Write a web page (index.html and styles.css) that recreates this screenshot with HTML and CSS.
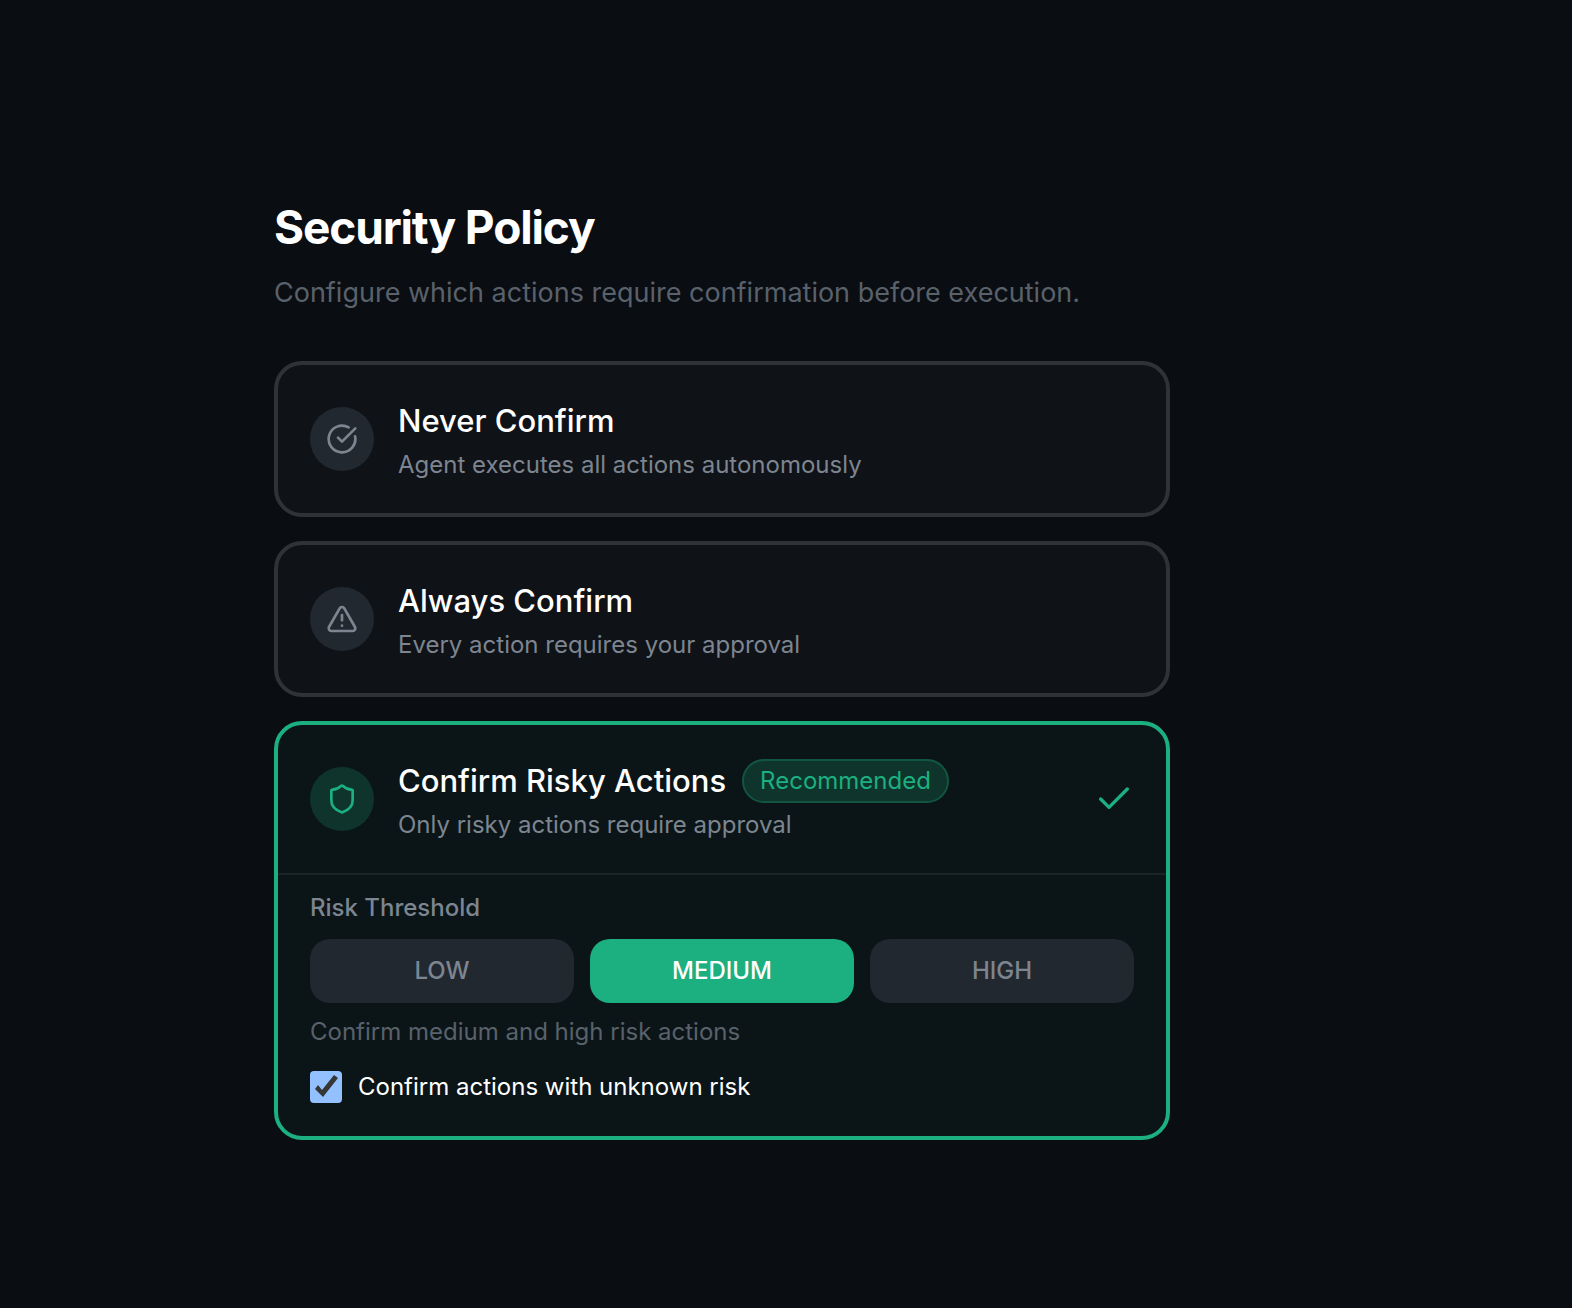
FILE: index.html
```html
<!DOCTYPE html>
<html lang="en">
<head>
  <meta charset="UTF-8">
  <meta name="viewport" content="width=device-width, initial-scale=1.0">
  <title>Security Policy</title>
  <link rel="stylesheet" href="styles.css">
</head>
<body>
  <main class="container">
    <header class="page-header">
      <h1>Security Policy</h1>
      <p>Configure which actions require confirmation before execution.</p>
    </header>

    <div class="policy-list">
      <div class="policy-card">
        <button type="button" class="policy-option">
          <span class="policy-icon">
            <svg viewBox="0 0 24 24" aria-hidden="true">
              <path d="M21.801 10A10 10 0 1 1 17 3.335"/>
              <path d="m9 11 3 3L22 4"/>
            </svg>
          </span>
          <span class="policy-text">
            <span class="policy-title">Never Confirm</span>
            <span class="policy-desc">Agent executes all actions autonomously</span>
          </span>
        </button>
      </div>

      <div class="policy-card">
        <button type="button" class="policy-option">
          <span class="policy-icon">
            <svg viewBox="0 0 24 24" aria-hidden="true">
              <path d="m21.73 18-8-14a2 2 0 0 0-3.48 0l-8 14A2 2 0 0 0 4 21h16a2 2 0 0 0 1.73-3"/>
              <path d="M12 9v4"/>
              <path d="M12 17h.01"/>
            </svg>
          </span>
          <span class="policy-text">
            <span class="policy-title">Always Confirm</span>
            <span class="policy-desc">Every action requires your approval</span>
          </span>
        </button>
      </div>

      <div class="policy-card selected">
        <button type="button" class="policy-option">
          <span class="policy-icon">
            <svg viewBox="0 0 24 24" aria-hidden="true">
              <path d="M20 13c0 5-3.5 7.5-7.66 8.95a1 1 0 0 1-.67-.01C7.5 20.5 4 18 4 13V6a1 1 0 0 1 1-1c2 0 4.5-1.2 6.24-2.72a1.17 1.17 0 0 1 1.52 0C14.51 3.81 17 5 19 5a1 1 0 0 1 1 1z"/>
            </svg>
          </span>
          <span class="policy-text">
            <span class="policy-title">Confirm Risky Actions <span class="badge">Recommended</span></span>
            <span class="policy-desc">Only risky actions require approval</span>
          </span>
          <svg class="policy-check" viewBox="0 0 24 24" aria-hidden="true">
            <path d="M20 6 9 17l-5-5"/>
          </svg>
        </button>

        <div class="policy-settings">
          <div class="threshold-label" id="threshold-label">Risk Threshold</div>
          <div class="threshold-group" role="group" aria-labelledby="threshold-label">
            <button type="button" class="threshold-btn">LOW</button>
            <button type="button" class="threshold-btn active">MEDIUM</button>
            <button type="button" class="threshold-btn">HIGH</button>
          </div>
          <p class="threshold-hint">Confirm medium and high risk actions</p>
          <label class="unknown-risk" for="unknown-risk">
            <input type="checkbox" id="unknown-risk" checked>
            <span>Confirm actions with unknown risk</span>
          </label>
        </div>
      </div>
    </div>
  </main>
</body>
</html>
```
FILE: styles.css
```css
:root {
  --bg-color: #0a0d12;
  --card-color: #0f1217;
  --border-color: #303236;
  --surface-color: #222830;
  --text-color: #ffffff;
  --text-secondary: #7d8590;
  --text-muted: #59616b;
  --accent: #1caf80;
}

* {
  box-sizing: border-box;
}

body {
  margin: 0;
  background-color: var(--bg-color);
  color: var(--text-color);
  font-family: Inter, "Noto Sans", sans-serif;
  font-size: 24px;
  line-height: 34px;
}

h1, p {
  margin: 0;
}

button {
  border: none;
  background: none;
  color: inherit;
  font: inherit;
  cursor: pointer;
}

svg {
  fill: none;
  stroke: currentColor;
  stroke-width: 2;
  stroke-linecap: round;
  stroke-linejoin: round;
}

.container {
  max-width: 1298px;
  padding: 197px 128px 168px 274px;
}

/* header */
.page-header {
  margin-bottom: 48px;
}
.page-header h1 {
  margin-bottom: 16px;
  font-size: 46px;
  font-weight: 700;
  line-height: 60px;
  letter-spacing: -0.025em;
}
.page-header p {
  color: var(--text-muted);
  font-size: 27px;
  line-height: 40px;
}

/* policy cards */
.policy-list {
  display: flex;
  flex-direction: column;
  gap: 24px;
}
.policy-card {
  border: 4px solid var(--border-color);
  border-radius: 28px;
  background-color: var(--card-color);
}
.policy-card.selected {
  border-color: var(--accent);
  background-color: #0b1518;
}
.policy-option {
  display: flex;
  align-items: center;
  gap: 24px;
  width: 100%;
  padding: 30px 32px;
  text-align: left;
}
.policy-icon {
  display: flex;
  flex-shrink: 0;
  align-items: center;
  justify-content: center;
  width: 64px;
  height: 64px;
  border-radius: 50%;
  background-color: var(--surface-color);
  color: var(--text-secondary);
}
.policy-icon svg {
  width: 32px;
  height: 32px;
}
.selected .policy-icon {
  background-color: #0e342b;
  color: var(--accent);
}
.policy-text {
  flex: 1;
}
.policy-title {
  display: flex;
  align-items: center;
  gap: 16px;
  height: 52px;
  font-size: 31px;
  font-weight: 500;
}
.policy-desc {
  display: block;
  color: var(--text-secondary);
  line-height: 36px;
}
.badge {
  padding: 3px 16px;
  border: 2px solid #125540;
  border-radius: 22px;
  background-color: #0e342b;
  color: var(--accent);
  font-size: 24px;
  font-weight: 400;
}
.policy-check {
  flex-shrink: 0;
  width: 40px;
  height: 40px;
  color: var(--accent);
}

/* threshold settings */
.policy-settings {
  padding: 16px 32px 32px;
  border-top: 2px solid #1b2427;
}
.threshold-label {
  margin-bottom: 14px;
  color: var(--text-secondary);
  font-weight: 500;
}
.threshold-group {
  display: grid;
  grid-template-columns: repeat(3, 1fr);
  gap: 16px;
}
.threshold-btn {
  padding: 15px;
  border-radius: 20px;
  background-color: var(--surface-color);
  color: var(--text-secondary);
  font-weight: 500;
}
.threshold-btn.active {
  background-color: var(--accent);
  color: var(--text-color);
}
.threshold-hint {
  margin: 12px 0 21px;
  color: var(--text-muted);
}
.unknown-risk {
  display: flex;
  align-items: center;
  gap: 16px;
  cursor: pointer;
}
.unknown-risk input {
  appearance: none;
  width: 32px;
  height: 32px;
  margin: 0;
  border-radius: 4px;
  background-color: #93c1ff;
}
.unknown-risk input:checked::before {
  content: "";
  display: block;
  width: 32px;
  height: 32px;
  background-color: #363636;
  clip-path: polygon(5px 18px, 8px 14px, 12px 19px, 24px 4px, 28px 7px, 13px 26px);
}
```
